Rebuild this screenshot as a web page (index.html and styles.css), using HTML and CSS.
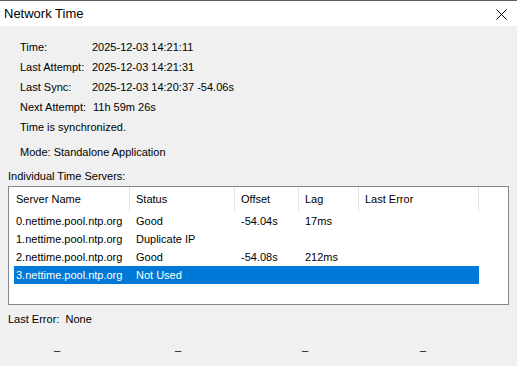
FILE: index.html
```html
<!DOCTYPE html>
<html lang="en">
<head>
    <meta charset="UTF-8">
    <title>Network Time</title>
    <link rel="stylesheet" href="styles.css">
</head>
<body>
    <div class="janela">
        <div class="barra-titulo">
            <span class="titulo">Network Time</span>
            <span class="fechar">
                <svg width="11" height="11" viewBox="0 0 11 11">
                    <path d="M0.5 0.5 L10.5 10.5 M10.5 0.5 L0.5 10.5" stroke="#000" stroke-width="1" fill="none"/>
                </svg>
            </span>
        </div>

        <div class="conteudo">
            <div class="info">
                <div class="linha"><span class="rotulo">Time:</span><span>2025-12-03 14:21:11</span></div>
                <div class="linha"><span class="rotulo">Last Attempt:</span><span>2025-12-03 14:21:31</span></div>
                <div class="linha"><span class="rotulo">Last Sync:</span><span>2025-12-03 14:20:37 -54.06s</span></div>
                <div class="linha"><span class="rotulo rotulo-next">Next Attempt:</span><span>11h 59m 26s</span></div>
                <div class="linha">Time is synchronized.</div>
                <div class="linha modo">Mode: Standalone Application</div>
            </div>

            <div class="secao">Individual Time Servers:</div>

            <div class="lista">
                <div class="cabecalho">
                    <div class="col">Server Name</div>
                    <div class="col">Status</div>
                    <div class="col">Offset</div>
                    <div class="col">Lag</div>
                    <div class="col">Last Error</div>
                </div>
                <div class="item">
                    <div class="col">0.nettime.pool.ntp.org</div>
                    <div class="col">Good</div>
                    <div class="col">-54.04s</div>
                    <div class="col">17ms</div>
                    <div class="col"></div>
                </div>
                <div class="item">
                    <div class="col">1.nettime.pool.ntp.org</div>
                    <div class="col">Duplicate IP</div>
                    <div class="col"></div>
                    <div class="col"></div>
                    <div class="col"></div>
                </div>
                <div class="item">
                    <div class="col">2.nettime.pool.ntp.org</div>
                    <div class="col">Good</div>
                    <div class="col">-54.08s</div>
                    <div class="col">212ms</div>
                    <div class="col"></div>
                </div>
                <div class="item selecionado">
                    <div class="col">3.nettime.pool.ntp.org</div>
                    <div class="col">Not Used</div>
                    <div class="col"></div>
                    <div class="col"></div>
                    <div class="col"></div>
                </div>
            </div>

            <div class="ultimo-erro">Last Error:&nbsp; None</div>

            <div class="tracos">
                <span>_</span>
                <span>_</span>
                <span>_</span>
                <span>_</span>
            </div>
        </div>
    </div>
</body>
</html>
```

FILE: styles.css
```css
* {
    margin: 0;
    padding: 0;
    box-sizing: border-box;
}

body {
    font-family: "Liberation Sans", Arial, sans-serif;
    font-size: 11px;
    color: #000;
    background-color: #f0f0f0;
    width: 517px;
    height: 366px;
    overflow: hidden;
}

.barra-titulo {
    display: flex;
    align-items: center;
    justify-content: space-between;
    height: 26px;
    background-color: #fff;
    border-top: 1px solid #5f5f5f;
    padding: 0 10px 0 4px;
}

.titulo {
    font-size: 13px;
}

.fechar {
    display: flex;
    margin-top: 1px;
}

.conteudo {
    background-color: #f0f0f0;
    height: 340px;
}

/* Informações de sincronização */
.info {
    padding: 11px 0 0 20px;
}

.linha {
    display: flex;
    line-height: 20px;
    height: 20px;
}

.rotulo {
    width: 72px;
}

.rotulo-next {
    width: 73px;
}

.modo {
    margin-top: 5px;
}

.secao {
    margin: 5px 0 0 8px;
    line-height: 19px;
    height: 19px;
}

/* Lista de servidores */
.lista {
    margin-left: 8px;
    width: 501px;
    height: 119px;
    border: 1px solid #828790;
    background-color: #fff;
    padding-left: 5px;
}

.cabecalho, .item {
    display: grid;
    grid-template-columns: 116px 105px 64px 60px 120px;
    width: 465px;
}

.cabecalho {
    height: 25px;
    line-height: 25px;
}

.cabecalho .col {
    border-right: 1px solid #e5e5e5;
}

.item {
    height: 18px;
    line-height: 18px;
}

.col {
    padding-left: 6px;
    white-space: nowrap;
}

.col:first-child {
    padding-left: 2px;
}

.selecionado {
    background-color: #0078d7;
    color: #fff;
}

.ultimo-erro {
    margin: 5px 0 0 8px;
    line-height: 18px;
}

.tracos {
    display: grid;
    grid-template-columns: 121px 127px 118px auto;
    padding-left: 54px;
    margin-top: 9px;
    line-height: 18px;
}
```
